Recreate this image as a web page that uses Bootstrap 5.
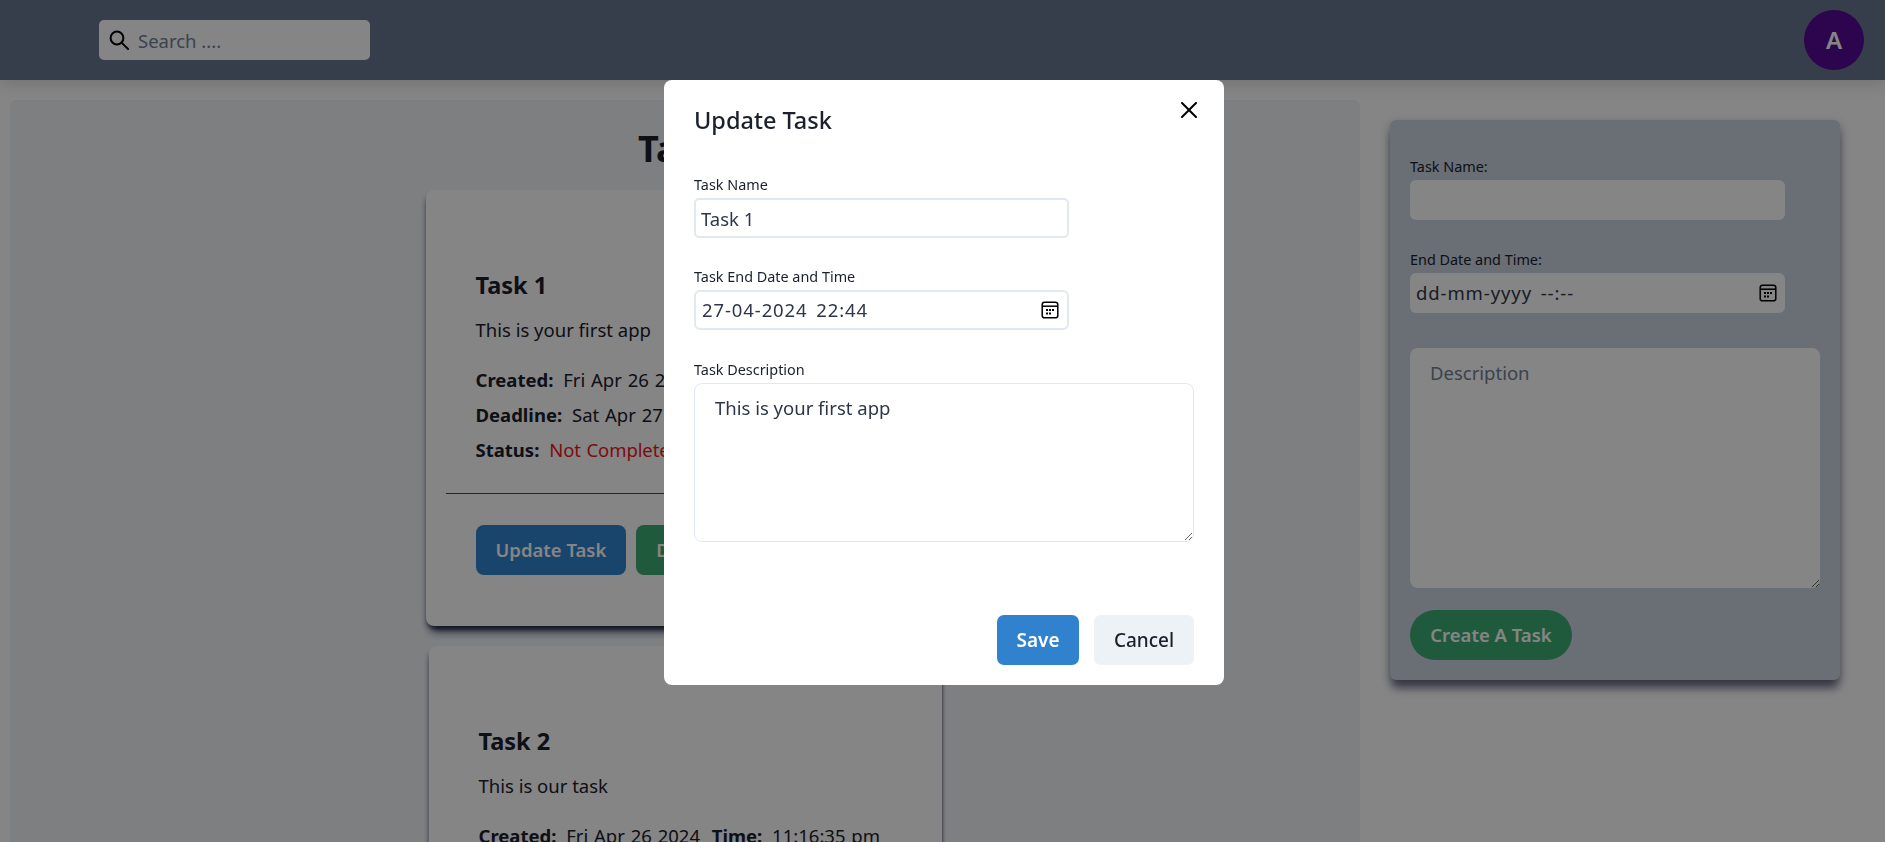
<!DOCTYPE html>
<html lang="en">
<head>
  <meta charset="UTF-8">
  <title>Task Manager</title>
  <meta name="viewport" content="width=device-width, initial-scale=1">
  <link href="https://cdn.jsdelivr.net/npm/bootstrap@5.3.0/dist/css/bootstrap.min.css" rel="stylesheet">
  <style>
    body {
      font-family: "Noto Sans", "Open Sans", sans-serif;
      color: #1a202c;
      background: #fff;
      height: 842px;
      overflow: hidden;
    }
    /* Top bar */
    .top-bar {
      height: 80px;
      padding: 0 21px 0 99px;
      background: #6a7791;
      box-shadow: 0 4px 14px rgba(0, 0, 0, .14);
      position: relative;
    }
    .search-box {
      width: 271px;
      height: 40px;
      background: #fff;
      border-radius: 5px;
      padding-left: 10px;
      gap: 9px;
    }
    .search-box input {
      border: 0;
      outline: 0;
      width: 200px;
      padding: 2px 0 0;
      background: transparent;
      font-size: 18.5px;
    }
    .search-box input::placeholder,
    .side-area::placeholder { color: #718096; opacity: 1; }
    .date-ph::placeholder { color: #2d3748; opacity: 1; }
    .avatar-circle {
      width: 60px;
      height: 60px;
      border-radius: 50%;
      background: #550a96;
      color: #fff;
      font-size: 24px;
      font-weight: 600;
    }
    /* Page areas */
    .task-panel {
      width: 1350px;
      height: 742px;
      margin: 20px 0 0 10px;
      background: #eff3f7;
      border-radius: 6px 6px 0 0;
      overflow: hidden;
    }
    .task-heading {
      font-size: 36px;
      font-weight: 700;
      line-height: 50px;
      margin: 24px 0 16px;
      padding-left: 4px;
      text-align: center;
    }
    .task-box {
      background: #fff;
      border: 0;
      border-radius: 8px;
      padding: 79px 0 50px;
      margin: 0 auto 20px;
      height: 436px;
      box-shadow: 0 10px 8px -5px rgba(30, 38, 70, .95), 2px 4px 3px -1px rgba(20, 24, 36, .45), -2px 4px 5px -2px rgba(30, 38, 70, .5);
    }
    .box-one { width: 519px; }
    .box-two { width: 513px; }
    .task-title {
      font-size: 23.5px;
      font-weight: 700;
      line-height: 32px;
      margin: 0 0 14px;
      padding: 0 50px;
    }
    .task-desc {
      font-size: 18.5px;
      line-height: 30px;
      margin: 0 0 17px;
      padding: 0 50px;
    }
    .task-line {
      font-size: 18.5px;
      line-height: 35px;
      padding: 0 50px;
      white-space: nowrap;
    }
    .task-line b { font-weight: 700; margin-right: 5px; }
    .task-line span { word-spacing: 1px; }
    .task-line b + span + b { margin-left: 7px; }
    .state-red { color: #f0161c; letter-spacing: -.1px; }
    .task-box > .task-rule {
      margin: 26px 20px 31px;
      border: 0;
      border-top: 1px solid #000;
      opacity: .7;
    }
    .task-actions { padding: 0 50px; gap: 10px; }
    .act-btn {
      height: 50px;
      padding: 0 20px;
      border: 0;
      border-radius: 8px;
      font-size: 18.5px;
      font-weight: 600;
      color: #fff;
      white-space: nowrap;
    }
    .act-blue { background: #3182ce; }
    .act-green { background: #3dad73; }
    /* Create form */
    .create-box {
      width: 450px;
      height: 560px;
      margin: 40px 0 0 30px;
      padding: 37px 20px 0;
      background: #cbd5e0;
      border-radius: 6px;
      box-shadow: 0 10px 10px -2px rgba(30, 38, 70, .6), 0 3px 10px rgba(30, 38, 70, .3);
    }
    .field-label {
      display: block;
      font-size: 14.4px;
      line-height: 20px;
      margin-bottom: 3px;
    }
    .side-field {
      display: block;
      width: 375px;
      height: 40px;
      background: #fff;
      border: 0;
      border-radius: 6px;
      margin-bottom: 30px;
      padding: 0 8px;
      outline: 0;
      font-size: 18.5px;
    }
    .date-wrap {
      width: 375px;
      height: 40px;
      padding: 0 6px;
      background: #fff;
      border-radius: 6px;
      margin-bottom: 35px;
    }
    .date-wrap input {
      border: 0;
      outline: 0;
      background: transparent;
      width: 300px;
      padding: 0;
      font-size: 18.5px;
      letter-spacing: .9px;
      word-spacing: 3px;
      color: #2d3748;
    }
    .date-wrap svg { margin-right: 2px; }
    .side-area {
      display: block;
      width: 410px;
      height: 240px;
      background: #fff;
      border: 0;
      border-radius: 8px;
      outline: 0;
      padding: 11px 20px;
      font-size: 18.5px;
      margin-bottom: 22px;
    }
    .create-btn {
      height: 50px;
      width: 162px;
      padding: 0;
      border: 0;
      border-radius: 25px;
      background: #3dad73;
      color: #fff;
      font-size: 18.5px;
      font-weight: 600;
    }
    /* Update dialog */
    .modal-backdrop.show { opacity: .48; }
    .modal-dialog.update-dialog {
      --bs-modal-width: 560px;
      margin: 80px 0 0 664px;
    }
    .update-dialog .modal-content {
      height: 605px;
      border: 0;
      border-radius: 8px;
    }
    .update-dialog .modal-header {
      border: 0;
      padding: 20px 23px 0 30px;
      align-items: flex-start;
    }
    .update-dialog .modal-title {
      font-size: 23.5px;
      font-weight: 500;
      line-height: 40px;
    }
    .update-dialog .btn-close {
      opacity: 1;
      margin: -2px 0 0;
      padding: 4px;
      width: 16px;
      height: 16px;
    }
    .update-dialog .modal-body { padding: 35px 30px 0; flex: 0 0 auto; }
    .modal-field {
      display: block;
      width: 375px;
      height: 40px;
      margin-bottom: 29px;
      padding: 0 5px;
      border: 2px solid #e2e8f0;
      border-radius: 5px;
      outline: 0;
      font-size: 18.5px;
      color: #2d3748;
    }
    .date-wrap.modal-date {
      border: 2px solid #e2e8f0;
      padding: 0 6px;
      margin-bottom: 30px;
    }
    .modal-area {
      display: block;
      width: 500px;
      height: 159px;
      padding: 10px 20px;
      border: 1px solid #e2e8f0;
      border-radius: 8px;
      outline: 0;
      font-size: 18.5px;
      color: #2d3748;
    }
    .update-dialog .modal-footer {
      border: 0;
      padding: 0 30px 20px;
      margin-top: auto;
      gap: 15px;
    }
    .update-dialog .modal-footer > * { margin: 0; }
    .save-btn, .cancel-btn {
      height: 50px;
      border: 0;
      border-radius: 7px;
      padding: 0;
      font-size: 19px;
    }
    .save-btn { width: 82px; background: #3182ce; color: #fff; font-weight: 600; }
    .cancel-btn { width: 100px; background: #edf2f7; color: #1a202c; font-weight: 500; }
  </style>
</head>
<body>
  <!-- Top bar -->
  <nav class="top-bar d-flex align-items-center justify-content-between">
    <div class="search-box d-flex align-items-center">
      <svg width="20" height="20" viewBox="0 0 20 20" fill="none" stroke="#000" stroke-width="2">
        <circle cx="8" cy="8" r="6.4"/>
        <path d="M12.6 12.6 19 19" stroke-linecap="round"/>
      </svg>
      <input type="text" placeholder="Search ....">
    </div>
    <div class="avatar-circle d-flex align-items-center justify-content-center">A</div>
  </nav>

  <div class="d-flex align-items-start">
    <!-- Task list -->
    <main class="task-panel">
      <h1 class="task-heading">Tasks</h1>

      <div class="card task-box box-one">
        <h2 class="task-title">Task 1</h2>
        <p class="task-desc">This is your first app</p>
        <div class="task-line"><b>Created:</b> <span>Fri Apr 26 2024</span> <b>Time:</b> <span>11:15:20 pm</span></div>
        <div class="task-line"><b>Deadline:</b> <span>Sat Apr 27 2024</span> <b>Time:</b> <span>10:44:00 pm</span></div>
        <div class="task-line"><b>Status:</b> <span class="state-red">Not Completed</span></div>
        <hr class="task-rule">
        <div class="task-actions d-flex">
          <button class="act-btn act-blue" type="button">Update Task</button>
          <button class="act-btn act-green" type="button">Delete Task</button>
        </div>
      </div>

      <div class="card task-box box-two">
        <h2 class="task-title">Task 2</h2>
        <p class="task-desc">This is our task</p>
        <div class="task-line"><b>Created:</b> <span>Fri Apr 26 2024</span> <b>Time:</b> <span>11:16:35 pm</span></div>
      </div>
    </main>

    <!-- Create form -->
    <aside class="create-box">
      <label class="field-label">Task Name:</label>
      <input class="side-field" type="text">
      <label class="field-label">End Date and Time:</label>
      <div class="date-wrap d-flex align-items-center justify-content-between">
        <input type="text" placeholder="dd-mm-yyyy --:--" class="date-ph">
        <svg width="18" height="18" viewBox="0 0 18 18" fill="none">
          <rect x="1.2" y="1.2" width="15.6" height="15.6" rx="2.4" stroke="#000" stroke-width="1.5"/>
          <path d="M1.5 5.2h15" stroke="#000" stroke-width="1.5"/>
          <path d="M5 8h2v2H5zM8 8h2v2H8zM11 8h2v2h-2zM5 11.4h2v2H5zM8 11.4h2v2H8z" fill="#000"/>
        </svg>
      </div>
      <textarea class="side-area" placeholder="Description"></textarea>
      <button class="create-btn" type="button">Create A Task</button>
    </aside>
  </div>

  <!-- Update dialog, open -->
  <div class="modal-backdrop fade show"></div>
  <div class="modal fade show d-block" tabindex="-1">
    <div class="modal-dialog update-dialog">
      <div class="modal-content">
        <div class="modal-header">
          <h5 class="modal-title">Update Task</h5>
          <button type="button" class="btn-close" aria-label="Close"></button>
        </div>
        <div class="modal-body">
          <label class="field-label">Task Name</label>
          <input class="modal-field" type="text" value="Task 1">
          <label class="field-label">Task End Date and Time</label>
          <div class="date-wrap modal-date d-flex align-items-center justify-content-between">
            <input type="text" value="27-04-2024 22:44">
            <svg width="18" height="18" viewBox="0 0 18 18" fill="none">
              <rect x="1.2" y="1.2" width="15.6" height="15.6" rx="2.4" stroke="#000" stroke-width="1.5"/>
              <path d="M1.5 5.2h15" stroke="#000" stroke-width="1.5"/>
              <path d="M5 8h2v2H5zM8 8h2v2H8zM11 8h2v2h-2zM5 11.4h2v2H5zM8 11.4h2v2H8z" fill="#000"/>
            </svg>
          </div>
          <label class="field-label">Task Description</label>
          <textarea class="modal-area">This is your first app</textarea>
        </div>
        <div class="modal-footer">
          <button class="save-btn" type="button">Save</button>
          <button class="cancel-btn" type="button">Cancel</button>
        </div>
      </div>
    </div>
  </div>

  <script src="https://cdn.jsdelivr.net/npm/bootstrap@5.3.0/dist/js/bootstrap.bundle.min.js"></script>
</body>
</html>
